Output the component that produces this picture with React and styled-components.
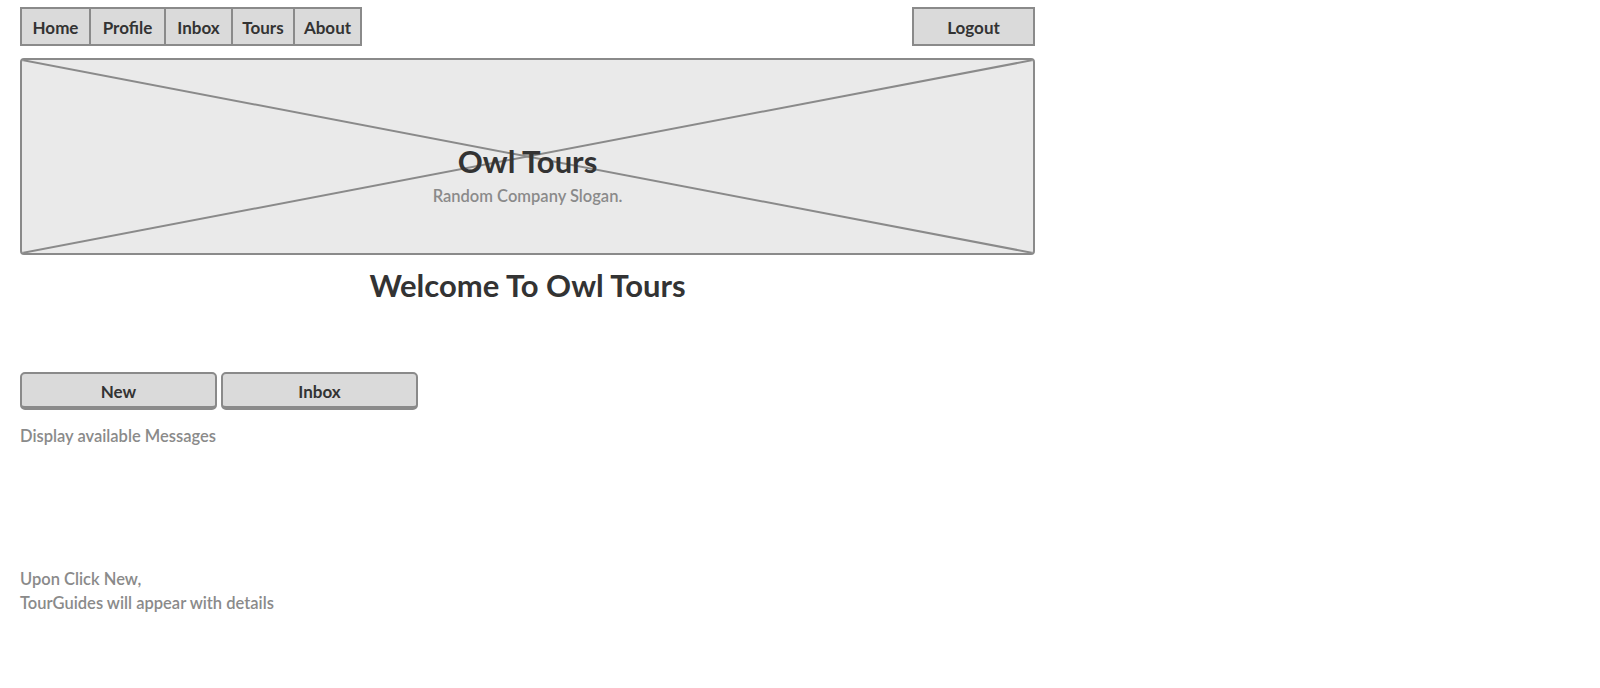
import React from "react";
import styled, { createGlobalStyle } from "styled-components";

const GlobalStyle = createGlobalStyle`
  body {
    margin: 0;
    background: #ffffff;
    font-family: Lato, "Open Sans", sans-serif;
  }
`;

const Page = styled.div`
  width: 1015px;
  padding: 7px 0 0 20px;
`;

const TopBar = styled.div`
  display: flex;
  justify-content: space-between;
  align-items: flex-start;
`;

const Tabs = styled.nav`
  display: flex;
  border: 2px solid #8a8a8a;
  background: #dadada;
`;

const Tab = styled.div`
  width: ${(p) => p.w}px;
  height: 35px;
  padding-top: 2px;
  display: flex;
  align-items: center;
  justify-content: center;
  box-sizing: border-box;
  font-size: 17px;
  font-weight: 700;
  color: #333;
  border-left: ${(p) => (p.first ? "none" : "2px solid #8a8a8a")};
`;

const LogoutButton = styled.div`
  width: 119px;
  height: 35px;
  padding-top: 2px;
  box-sizing: content-box;
  display: flex;
  align-items: center;
  justify-content: center;
  border: 2px solid #8a8a8a;
  background: #dadada;
  font-size: 17px;
  font-weight: 700;
  color: #333;
  height: 33px;
`;

const Banner = styled.div`
  position: relative;
  margin-top: 12px;
  height: 197px;
  border: 2px solid #8a8a8a;
  border-radius: 4px;
  background: #eaeaea;
  display: flex;
  flex-direction: column;
  align-items: center;
  padding-top: 85px;
  box-sizing: border-box;
  overflow: hidden;
`;

const Cross = styled.svg`
  position: absolute;
  inset: 0;
  width: 100%;
  height: 100%;
`;

const BannerTitle = styled.div`
  position: relative;
  font-size: 31px;
  font-weight: 700;
  color: #333;
  line-height: 32px;
`;

const Slogan = styled.div`
  position: relative;
  margin-top: 9px;
  font-size: 16.5px;
  font-weight: 600;
  color: #8a8a8a;
`;

const Welcome = styled.h1`
  margin: 12px 0 0;
  text-align: center;
  font-size: 31px;
  font-weight: 700;
  color: #333;
  line-height: 36px;
`;

const ButtonRow = styled.div`
  display: flex;
  gap: 4px;
  margin-top: 69px;
`;

const ActionButton = styled.div`
  width: 193px;
  height: 32px;
  padding-top: 2px;
  box-sizing: content-box;
  display: flex;
  align-items: center;
  justify-content: center;
  border: 2px solid #8a8a8a;
  border-bottom-width: 4px;
  border-radius: 5px;
  background: #dadada;
  font-size: 17px;
  font-weight: 700;
  color: #333;
  height: 30px;
`;

const Note = styled.p`
  margin: ${(p) => p.top}px 0 0;
  font-size: 16.5px;
  font-weight: 600;
  color: #8a8a8a;
  line-height: 24px;
`;

const tabs = [
  { label: "Home", w: 69 },
  { label: "Profile", w: 75 },
  { label: "Inbox", w: 67 },
  { label: "Tours", w: 62 },
  { label: "About", w: 67 },
];

export default function App() {
  return (
    <>
      <GlobalStyle />
      <Page>
        <TopBar>
          <Tabs>
            {tabs.map((t, i) => (
              <Tab key={t.label} w={i === 0 ? t.w - 2 : t.w} first={i === 0}>
                {t.label}
              </Tab>
            ))}
          </Tabs>
          <LogoutButton>Logout</LogoutButton>
        </TopBar>

        <Banner>
          <Cross viewBox="0 0 1010 193" preserveAspectRatio="none">
            <line x1="0" y1="0" x2="1010" y2="193" stroke="#8a8a8a" strokeWidth="2" />
            <line x1="1010" y1="0" x2="0" y2="193" stroke="#8a8a8a" strokeWidth="2" />
          </Cross>
          <BannerTitle>Owl Tours</BannerTitle>
          <Slogan>Random Company Slogan.</Slogan>
        </Banner>

        <Welcome>Welcome To Owl Tours</Welcome>

        <ButtonRow>
          <ActionButton>New</ActionButton>
          <ActionButton>Inbox</ActionButton>
        </ButtonRow>

        <Note top={14}>Display available Messages</Note>
        <Note top={119}>
          Upon Click New,
          <br />
          TourGuides will appear with details
        </Note>
      </Page>
    </>
  );
}
